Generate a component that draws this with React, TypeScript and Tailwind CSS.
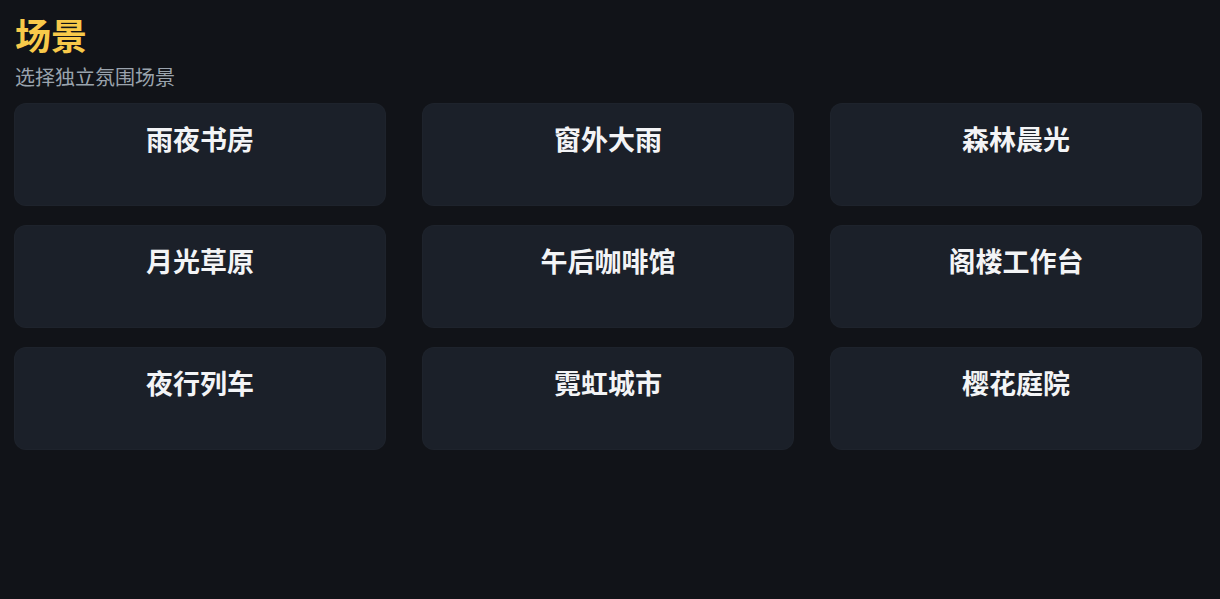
import React from 'react';

const scenes = [
  '雨夜书房',
  '窗外大雨',
  '森林晨光',
  '月光草原',
  '午后咖啡馆',
  '阁楼工作台',
  '夜行列车',
  '霓虹城市',
  '樱花庭院',
];

export default function App() {
  return (
    <div
      className="min-h-screen bg-[#111318] pl-[14px] pr-[18px] pt-[12px]"
      style={{ fontFamily: '"Noto Sans CJK SC", "Noto Sans", sans-serif' }}
    >
      <h1 className="pl-px text-[36px] font-bold leading-[44px] text-[#f8c94a]">场景</h1>
      <p className="mt-[7px] pl-px text-[20px] leading-[28px] text-[#9aa3ad]">选择独立氛围场景</p>
      <div className="mt-[12px] grid grid-cols-3 gap-x-[36px] gap-y-[19px]">
        {scenes.map((name) => (
          <button
            key={name}
            className="flex h-[103px] flex-col items-center rounded-[12px] border border-white/[0.015] bg-[#1b2029] pt-[15px] text-center"
          >
            <span className="text-[27px] font-semibold leading-[40px] text-[#f3f4f6]">{name}</span>
          </button>
        ))}
      </div>
    </div>
  );
}
